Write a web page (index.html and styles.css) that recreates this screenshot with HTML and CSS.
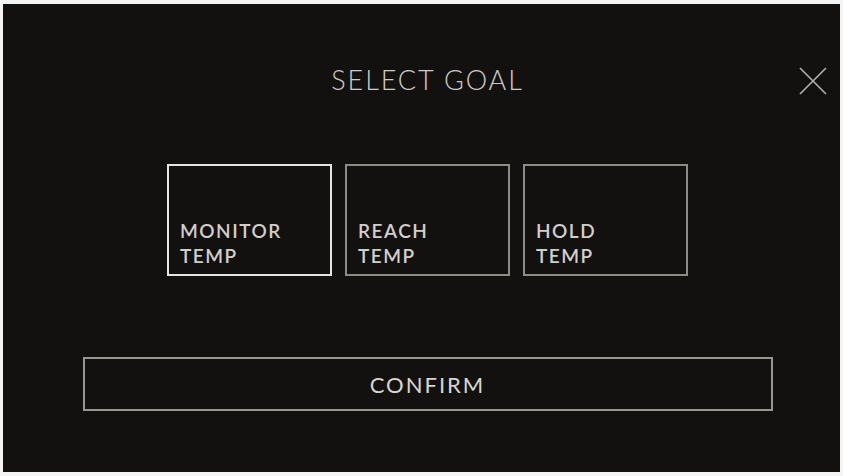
FILE: index.html
```html
<!DOCTYPE html>
<html>
<head>
<meta charset="utf-8">
<link rel="stylesheet" href="styles.css">
</head>
<body>
<div class="screen">
  <h1 class="title">SELECT GOAL</h1>
  <button class="close" aria-label="Close">
    <svg width="30" height="30" viewBox="0 0 30 30"><path d="M2 2 L28 28 M28 2 L2 28" stroke="#b3b0ac" stroke-width="1.6" fill="none"/></svg>
  </button>
  <div class="options">
    <div class="option selected"><span>MONITOR<br>TEMP</span></div>
    <div class="option"><span>REACH<br>TEMP</span></div>
    <div class="option"><span>HOLD<br>TEMP</span></div>
  </div>
  <div class="confirm">CONFIRM</div>
</div>
</body>
</html>
```
FILE: styles.css
```css
html, body {
  margin: 0;
  padding: 0;
  background: #f4f4f4;
}
body {
  padding: 4px 3px 4px 3px;
  width: 843px;
  height: 476px;
  box-sizing: border-box;
}
.screen {
  position: relative;
  height: 468px;
  background: #131110;
  display: flex;
  flex-direction: column;
  align-items: center;
  padding-left: 12px;
  box-sizing: border-box;
  font-family: Lato, "Noto Sans", sans-serif;
  color: #d6d3cf;
}
.title {
  margin: 61px 0 0 0;
  font-size: 27px;
  line-height: 30px;
  font-weight: 300;
  letter-spacing: 1.9px;
  color: #cfccc8;
}
.close {
  position: absolute;
  left: 795px;
  top: 62px;
  width: 30px;
  height: 30px;
  padding: 0;
  border: 0;
  background: none;
}
.close svg { display: block; }
.options {
  display: flex;
  gap: 13px;
  margin-top: 69px;
}
.option {
  width: 165px;
  height: 112px;
  box-sizing: border-box;
  border: 2px solid #8f8b87;
  display: flex;
  align-items: flex-end;
  padding: 0 11px 6px;
  font-size: 19px;
  line-height: 25px;
  font-weight: 600;
  letter-spacing: 1.5px;
  color: #d2cfcb;
}
.option.selected {
  border-color: #e6e4e1;
}
.confirm {
  margin-top: 81px;
  width: 690px;
  height: 54px;
  box-sizing: border-box;
  border: 2px solid #9a9692;
  display: flex;
  align-items: center;
  justify-content: center;
  font-size: 22px;
  letter-spacing: 2px;
  color: #d8d5d1;
}
```
